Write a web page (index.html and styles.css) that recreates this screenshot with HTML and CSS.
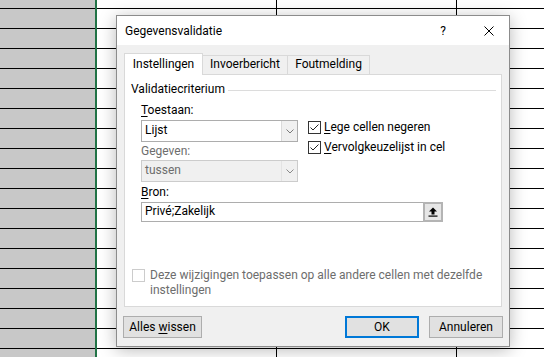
FILE: index.html
```html
<!DOCTYPE html>
<html lang="nl">
<head>
<meta charset="utf-8">
<title>Gegevensvalidatie</title>
<link rel="stylesheet" href="styles.css">
</head>
<body>
<div class="sheet">
  <div class="rowhead"></div>
  <div class="freeze"></div>
  <div class="col"></div>
  <div class="vline"></div>
  <div class="col"></div>
  <div class="vline"></div>
  <div class="col"></div>
</div>

<div class="dialog">
  <div class="titlebar">
    <span class="title">Gegevensvalidatie</span>
    <span class="help">?</span>
    <svg class="close" width="10" height="10" viewBox="0 0 10 10"><path d="M0.5 0.5L9.5 9.5M9.5 0.5L0.5 9.5" stroke="#000" stroke-width="1" fill="none"/></svg>
  </div>
  <div class="body">
    <div class="tabs">
      <div class="tab active t1">Instellingen</div>
      <div class="tab t2">Invoerbericht</div>
      <div class="tab t3">Foutmelding</div>
    </div>
    <div class="panel">
      <div class="ghead"><span>Validatiecriterium</span><div class="gline"></div></div>
      <div class="gbody">
        <div class="toprow">
          <div class="leftcol">
            <div class="label"><u>T</u>oestaan:</div>
            <div class="combo">
              <span class="ctext">Lijst</span>
              <span class="cbtn"><svg width="8" height="5" viewBox="0 0 8 5"><path d="M0.5 0.5L4 4L7.5 0.5" stroke="#7a7a7a" fill="none"/></svg></span>
            </div>
            <div class="label label2 dis">Gegeven:</div>
            <div class="combo disabled">
              <span class="ctext">tussen</span>
              <span class="cbtn"><svg width="8" height="5" viewBox="0 0 8 5"><path d="M0.5 0.5L4 4L7.5 0.5" stroke="#8a8a8a" fill="none"/></svg></span>
            </div>
          </div>
          <div class="rightcol">
            <div class="cbrow">
              <span class="cb"><svg width="11" height="11" viewBox="0 0 11 11"><path d="M1.5 5.5L4 8L9.5 2.5" stroke="#222" stroke-width="1" fill="none"/></svg></span>
              <span class="cblabel"><u>L</u>ege cellen negeren</span>
            </div>
            <div class="cbrow">
              <span class="cb"><svg width="11" height="11" viewBox="0 0 11 11"><path d="M1.5 5.5L4 8L9.5 2.5" stroke="#222" stroke-width="1" fill="none"/></svg></span>
              <span class="cblabel"><u>V</u>ervolgkeuzelijst in cel</span>
            </div>
          </div>
        </div>
        <div class="label label3"><u>B</u>ron:</div>
        <div class="source">
          <span class="stext">Privé;Zakelijk</span>
          <span class="sbtn"><svg width="10" height="10" viewBox="0 0 10 10"><path d="M5 0.5L9 4.5H6.5V7.5H3.5V4.5H1Z" fill="#000"/><rect x="0.5" y="8.5" width="9" height="1.2" fill="#000"/></svg></span>
        </div>
      </div>
      <div class="apply">
        <span class="cb cbdis"></span>
        <span class="applytext">Deze wijzigingen toepassen op alle andere cellen met dezelfde<br>instellingen</span>
      </div>
    </div>
    <div class="buttons">
      <div class="btn b-clear">Alles <u>w</u>issen</div>
      <div class="spacer"></div>
      <div class="btn b-ok">OK</div>
      <div class="btn b-cancel">Annuleren</div>
    </div>
  </div>
</div>
</body>
</html>
```

FILE: styles.css
```css
html, body {
  margin: 0;
  padding: 0;
}
body {
  width: 544px;
  height: 357px;
  overflow: hidden;
  position: relative;
  font-family: "Segoe UI", Roboto, "Noto Sans", sans-serif;
  font-size: 12px;
  line-height: 16px;
  color: #000;
  background: #fff;
}
u { text-decoration: underline; text-underline-offset: 2px; text-decoration-thickness: 1px; }

/* spreadsheet background */
.sheet {
  display: grid;
  grid-template-columns: 95px 2px 179px 1px 179px 1px 1fr;
  width: 544px;
  height: 357px;
  background-color: #fff;
  background-image: linear-gradient(#000 0 1px, transparent 1px);
  background-size: 100% 20px;
  background-position: 0 8px;
}
.rowhead {
  background-color: #c8c8c8;
  background-image: linear-gradient(#000 0 1px, transparent 1px);
  background-size: 100% 20px;
  background-position: 0 8px;
}
.freeze {
  background: #217346;
}
.vline {
  background: #000;
}

/* dialog */
.dialog {
  position: absolute;
  left: 116px;
  top: 15px;
  width: 394px;
  height: 332px;
  box-sizing: border-box;
  border: 1px solid #8c8c8c;
  background: #f0f0f0;
  box-shadow: 0 3px 16px rgba(0, 0, 0, 0.28);
  display: flex;
  flex-direction: column;
}
.titlebar {
  height: 29px;
  flex: none;
  background: #fff;
  display: flex;
  align-items: center;
  padding: 0 15px 0 8px;
}
.title {
  flex: 1;
}
.help {
  width: 12px;
  text-align: center;
  margin-right: 35px;
}
.close {
  display: block;
}

.body {
  flex: 1;
  display: flex;
  flex-direction: column;
  padding: 8px 7px 0 7px;
}
.tabs {
  display: flex;
  align-items: flex-end;
  height: 21px;
  flex: none;
}
.tab {
  box-sizing: border-box;
  height: 19px;
  border: 1px solid #d9d9d9;
  border-bottom: none;
  background: #f0f0f0;
  text-align: center;
  line-height: 16px;
  padding-top: 0;
}
.tab.active {
  height: 22px;
  margin-bottom: -1px;
  background: #fff;
  padding-top: 2px;
  position: relative;
  z-index: 1;
}
.t1 { width: 79px; }
.t2 { width: 85px; border-left: none; }
.t3 { width: 83px; border-left: 1px solid #d9d9d9; margin-left: -1px; }

.panel {
  height: 233px;
  flex: none;
  box-sizing: border-box;
  border: 1px solid #d9d9d9;
  background: #fff;
  padding: 6px 5px 0 0;
}
.ghead {
  display: flex;
  align-items: flex-start;
  padding-left: 6px;
  height: 16px;
}
.gline {
  flex: 1;
  height: 1px;
  background: #dcdcdc;
  margin: 9px 0 0 3px;
}
.gbody {
  padding-left: 16px;
  margin-top: 5px;
}
.toprow {
  display: flex;
}
.leftcol {
  width: 157px;
}
.label {
  height: 18px;
}
.label2 {
  box-sizing: border-box;
  padding-top: 1px;
}
.label3 {
  box-sizing: border-box;
  height: 20px;
  padding-top: 2px;
}
.dis { color: #6d6d6d; }

.combo {
  box-sizing: border-box;
  height: 22px;
  border: 1px solid #adadad;
  background: #fff;
  display: flex;
}
.ctext {
  flex: 1;
  padding: 1px 0 0 3px;
}
.cbtn {
  width: 15px;
  border-left: 1px solid #dadada;
  background: #f0f0f0;
  display: flex;
  align-items: center;
  justify-content: center;
}
.combo.disabled {
  border-color: #cccccc;
  background: #f0f0f0;
  color: #6d6d6d;
}
.combo.disabled .cbtn {
  border-left-color: #e3e3e3;
}

.rightcol {
  margin: 16px 0 0 10px;
}
.cbrow {
  display: flex;
  align-items: flex-start;
  height: 20px;
}
.cb {
  box-sizing: border-box;
  width: 13px;
  height: 13px;
  border: 1px solid #333;
  background: #fff;
  margin-top: 3px;
  display: flex;
  flex: none;
}
.cblabel {
  margin-left: 3px;
  padding-top: 1px;
}

.source {
  box-sizing: border-box;
  width: 302px;
  height: 20px;
  border: 1px solid #adadad;
  display: flex;
}
.stext {
  flex: 1;
  padding-left: 3px;
}
.sbtn {
  box-sizing: border-box;
  width: 20px;
  height: 20px;
  margin: -1px -1px -1px 0;
  border: 2px solid #b4b4b4;
  background: #e6e6e6;
  display: flex;
  align-items: center;
  justify-content: center;
}

.apply {
  display: flex;
  align-items: flex-start;
  margin: 46px 0 0 7px;
}
.cbdis {
  border-color: #cccccc;
  margin-top: 1px;
}
.applytext {
  margin-left: 5px;
  color: #6d6d6d;
  line-height: 15px;
  white-space: nowrap;
}

.buttons {
  display: flex;
  margin: 9px -1px 0 -1px;
}
.spacer { flex: 1; }
.btn {
  box-sizing: border-box;
  height: 22px;
  border: 1px solid #adadad;
  background: #e1e1e1;
  text-align: center;
  line-height: 16px;
  padding-top: 2px;
}
.b-clear { width: 79px; }
.b-ok {
  width: 74px;
  border: 2px solid #0078d7;
  padding-top: 1px;
  margin-right: 10px;
}
.b-cancel { width: 74px; }
```
